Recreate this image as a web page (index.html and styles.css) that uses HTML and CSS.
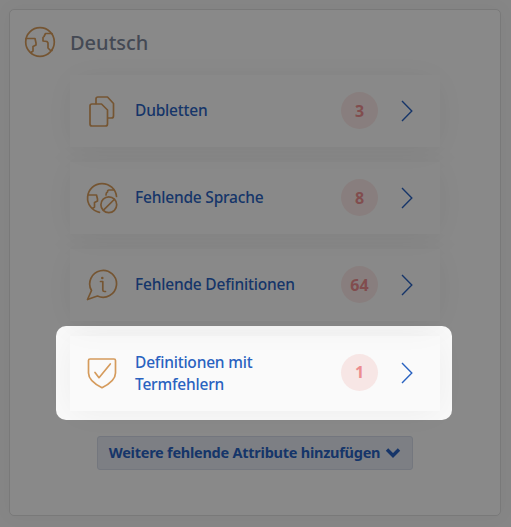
FILE: index.html
```html
<!DOCTYPE html>
<html lang="de">
  <head>
    <meta charset="UTF-8" />
    <meta name="viewport" content="width=device-width, initial-scale=1.0" />
    <title>Deutsch</title>
    <link rel="stylesheet" href="styles.css">
  </head>
  <body>
    <div class="panel">
      <div class="panel-header">
        <svg class="icon" viewBox="0 0 32 32">
          <circle cx="16" cy="16" r="14.300" />
          <path d="M2 12.500h9l1 4.500v2l-3 1.500v4.500l-2 1.500M28 7.500h-6.500l-1.500 3-1 1v3.500l4 .5 1 1.500v5l2.500 2.500h1.500" />
        </svg>
        <h2>Deutsch</h2>
      </div>

      <div class="cards">
        <a class="card">
          <svg class="icon" viewBox="0 0 32 32">
            <path d="M10 8.500V4q0-2 2-2h9.500l6 6.500v12.500q0 2-2 2H22" />
            <path d="M4 11q0-2 2-2h9.500l6 6v14q0 2-2 2H6q-2 0-2-2z" />
          </svg>
          <span class="label">Dubletten</span>
          <span class="count">3</span>
          <svg class="chevron" viewBox="0 0 12 22"><path d="M1 1l9.800 10L1 21" /></svg>
        </a>

        <a class="card">
          <svg class="icon" viewBox="0 0 32 32">
            <path d="M30.500 14.500A14.500 14.500 0 1 0 13.500 30.300M2 13h8.500l1 4v2l-3 1.500v4.500l-2 1.500M28 8h-5q-1.500 0-1.500 2-1.500 .5-1.500 3" />
            <circle cx="22.800" cy="22.800" r="7.900" />
            <path d="M17.500 28.200L28.200 17.500" />
          </svg>
          <span class="label">Fehlende Sprache</span>
          <span class="count">8</span>
          <svg class="chevron" viewBox="0 0 12 22"><path d="M1 1l9.800 10L1 21" /></svg>
        </a>

        <a class="card">
          <svg class="icon" viewBox="0 0 32 32">
            <path d="M5.500 21.500A13.400 13.400 0 1 1 11.500 27L8.500 28 1.500 30.500Z" />
            <path d="M14.500 12.500h2.300v8.500q0 1.500 1.600 1.500h1.100" />
            <circle class="dot" cx="16.300" cy="9" r="1.300" />
          </svg>
          <span class="label">Fehlende Definitionen</span>
          <span class="count">64</span>
          <svg class="chevron" viewBox="0 0 12 22"><path d="M1 1l9.800 10L1 21" /></svg>
        </a>

        <a class="card card-active">
          <svg class="icon" viewBox="0 0 32 32">
            <path d="M4 2h24q1.500 0 1.500 1.500V16c0 6.500-6 11-13.500 14.700C8.500 27 2.500 22.500 2.500 16V3.500Q2.500 2 4 2z" />
            <path d="M9 15.500l4 5.200L24.300 7" />
          </svg>
          <span class="label">Definitionen mit Termfehlern</span>
          <span class="count">1</span>
          <svg class="chevron" viewBox="0 0 12 22"><path d="M1 1l9.800 10L1 21" /></svg>
        </a>
      </div>

      <button class="add-button">
        Weitere fehlende Attribute hinzufügen
        <svg class="arrow" viewBox="0 0 16 12"><path d="M2 2.500l6 6 6-6" /></svg>
      </button>
    </div>
  </body>
</html>
```
FILE: styles.css
```css
* {
  box-sizing: border-box;
}

body {
  margin: 0;
  padding: 9px 10px 10px 9px;
  height: 527px;
  overflow: hidden;
  background-color: #f4f4f4;
  font-family: "Noto Sans", "Open Sans", sans-serif;
}

.panel {
  width: 492px;
  height: 507px;
  padding: 16px 14px;
  background-color: #fafafa;
  border: 1px solid #dcdcdc;
  border-radius: 5px;
  box-shadow: 0 0 20px rgba(0, 0, 0, 0.04);
}

.panel-header {
  display: flex;
  align-items: center;
  gap: 14px;
  height: 32px;
}

.panel-header h2 {
  margin: 0;
  color: #7d8699;
  font-size: 20px;
  font-weight: 500;
}

.icon {
  flex: none;
  width: 32px;
  height: 32px;
  fill: none;
  stroke: #d59b5c;
  stroke-width: 1.7;
  stroke-linecap: round;
  stroke-linejoin: round;
}

.icon .dot {
  fill: #d59b5c;
  stroke: none;
}

.cards {
  display: flex;
  flex-direction: column;
  gap: 15px;
  width: 370px;
  margin: 17px 0 0 46px;
}

.card {
  display: flex;
  align-items: center;
  height: 72px;
  padding: 0 27px 0 16px;
  background-color: #fafafa;
  box-shadow: 0 3px 36px rgba(0, 0, 0, 0.055);
}

/* each shadow falls on the card below it */
.card:nth-child(1) {
  z-index: 3;
}

.card:nth-child(2) {
  z-index: 2;
}

.card:nth-child(3) {
  z-index: 1;
}

.label {
  width: 180px;
  margin: 0 0 2px 17px;
  color: #2962c0;
  font-size: 15.5px;
  font-weight: 500;
  letter-spacing: -0.2px;
  line-height: 22px;
}

.count {
  width: 37px;
  height: 37px;
  margin: 0 0 1px 26px;
  border-radius: 50%;
  background-color: #f7e6e5;
  color: #ec8d8f;
  font-size: 16px;
  font-weight: 700;
  line-height: 38px;
  text-align: center;
}

.chevron {
  width: 12px;
  height: 22px;
  margin-left: 23px;
  fill: none;
  stroke: #2962c0;
  stroke-width: 1.4;
}

/* highlighted entry, everything around it is dimmed */
.card-active {
  position: relative;
  height: 75px;
}

.card-active .icon,
.card-active .chevron {
  margin-bottom: 2px;
}

.card-active .count {
  margin-bottom: 2px;
  line-height: 37px;
}

.card-active .label {
  padding-right: 40px;
}

.card-active::after {
  content: "";
  position: absolute;
  inset: -10px -12px -9px -14px;
  z-index: 10;
  border-radius: 10px;
  box-shadow: 0 0 0 1000px rgba(0, 0, 0, 0.45);
}

.add-button {
  display: flex;
  align-items: center;
  justify-content: center;
  gap: 5px;
  width: 316px;
  height: 34px;
  margin: 25px 0 0 73px;
  padding: 0 0 3px;
  border: 1px solid #d3d9e6;
  border-radius: 3px;
  background-color: #e4e8f1;
  color: #2962c0;
  font-family: inherit;
  font-size: 14.5px;
  font-weight: 700;
  letter-spacing: -0.25px;
  white-space: nowrap;
}

.arrow {
  width: 16px;
  height: 12px;
  margin-top: 3px;
  fill: none;
  stroke: #2962c0;
  stroke-width: 3.4;
}
```
